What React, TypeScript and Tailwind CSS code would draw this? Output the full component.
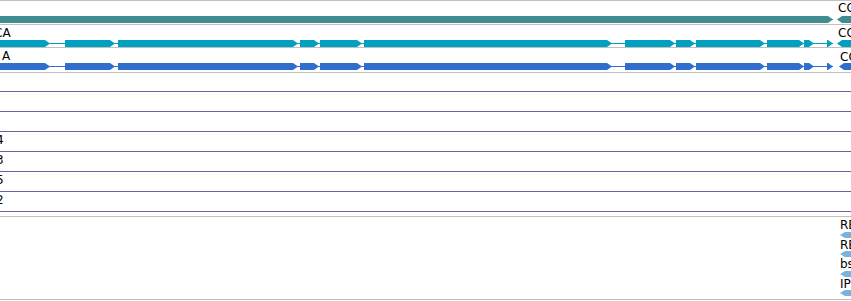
import React from "react"

const W = 851

// exon spans shared by the two transcript tracks
const exons: [number, number][] = [
  [-10, 50], [65, 115], [118, 298], [300, 319], [320, 362], [364, 612],
  [625, 675], [676, 695], [696, 765], [767, 804], [804, 814], [827, 833],
]

function arrowRight(x0: number, x1: number, h: number) {
  const tip = Math.min(5, x1 - x0)
  return `${x0},0 ${x1 - tip},0 ${x1},${h / 2} ${x1 - tip},${h} ${x0},${h}`
}

function arrowLeft(x: number, h: number) {
  return `${x},${h / 2} ${x + 5},0 ${W + 10},0 ${W + 10},${h} ${x + 5},${h}`
}

function GeneBar({ color, spans, intronEnd, revStart }: { color: string; spans: [number, number][]; intronEnd: number; revStart: number }) {
  return (
    <svg width={W} height={7} className="block">
      <rect x={0} y={3} width={intronEnd} height={1} fill={color} />
      {spans.map(([a, b], i) => (
        <polygon key={i} points={arrowRight(a, b, 7)} fill={color} />
      ))}
      <polygon points={arrowLeft(revStart, 7)} fill={color} />
    </svg>
  )
}

function GeneRow({ left, leftX, rightX, rightY = 0, color, spans, revStart }: { left?: string; leftX?: number; rightX: number; rightY?: number; color: string; spans: [number, number][]; revStart: number }) {
  return (
    <div className="h-[24px] flex flex-col">
      <div className="relative h-[15px] text-[12px] leading-[14px] text-black">
        {left && (
          <span className="absolute top-[1px] whitespace-nowrap" style={{ left: leftX }}>
            {left}
          </span>
        )}
        <span className="absolute whitespace-nowrap" style={{ left: rightX, top: rightY }}>
          COL1A2
        </span>
      </div>
      <GeneBar color={color} spans={spans} intronEnd={833} revStart={revStart} />
    </div>
  )
}

const rowLabels = ["", "", "", "4", "3", "5", "2"]
const bottomLabels = ["REST", "REST", "bsNRSF", "IP"]

export default function App() {
  return (
    <div
      className="w-[851px] h-[301px] overflow-hidden bg-white"
      style={{ fontFamily: '"DejaVu Sans", sans-serif' }}
    >
      {/* gene tracks */}
      <div className="border-y border-[#c0c0c0] divide-y divide-[#c0c0c0] h-[73px] flex flex-col">
        <GeneRow rightX={838} color="#3f8d91" spans={[[-10, 833]]} revStart={837} />
        <GeneRow left="CA" leftX={-6} rightX={838} rightY={1} color="#01a0c1" spans={exons} revStart={837} />
        <GeneRow left="A" leftX={2} rightX={840} rightY={2} color="#2f6ecc" spans={exons} revStart={839} />
      </div>

      {/* numbered rows */}
      <div className="flex flex-col">
        {rowLabels.map((l, i) => (
          <div
            key={i}
            className={
              i === 0
                ? "h-[19px] border-b border-[#6f5ea3] relative text-[12px] leading-[14px]"
                : "h-[20px] border-b border-[#6f5ea3] relative text-[12px] leading-[14px]"
            }
          >
            {l && <span className="absolute left-[-4px] top-[1px] text-black">{l}</span>}
          </div>
        ))}
      </div>

      {/* regulatory features */}
      <div className="mt-[4px] h-[84px] border-y border-[#c0c0c0] pt-[1px]">
        {bottomLabels.map((l, i) => (
          <div key={i} className="h-[19.5px] flex flex-col">
            <div className="relative h-[14px] text-[12px] leading-[14px] text-black">
              <span className="absolute left-[840px] top-0 whitespace-nowrap">{l}</span>
            </div>
            <svg width={W} height={6} className="block">
              <polygon points={`840,3 845,0 ${W + 10},0 ${W + 10},6 845,6`} fill="#7ab4dc" />
            </svg>
          </div>
        ))}
      </div>
    </div>
  )
}
